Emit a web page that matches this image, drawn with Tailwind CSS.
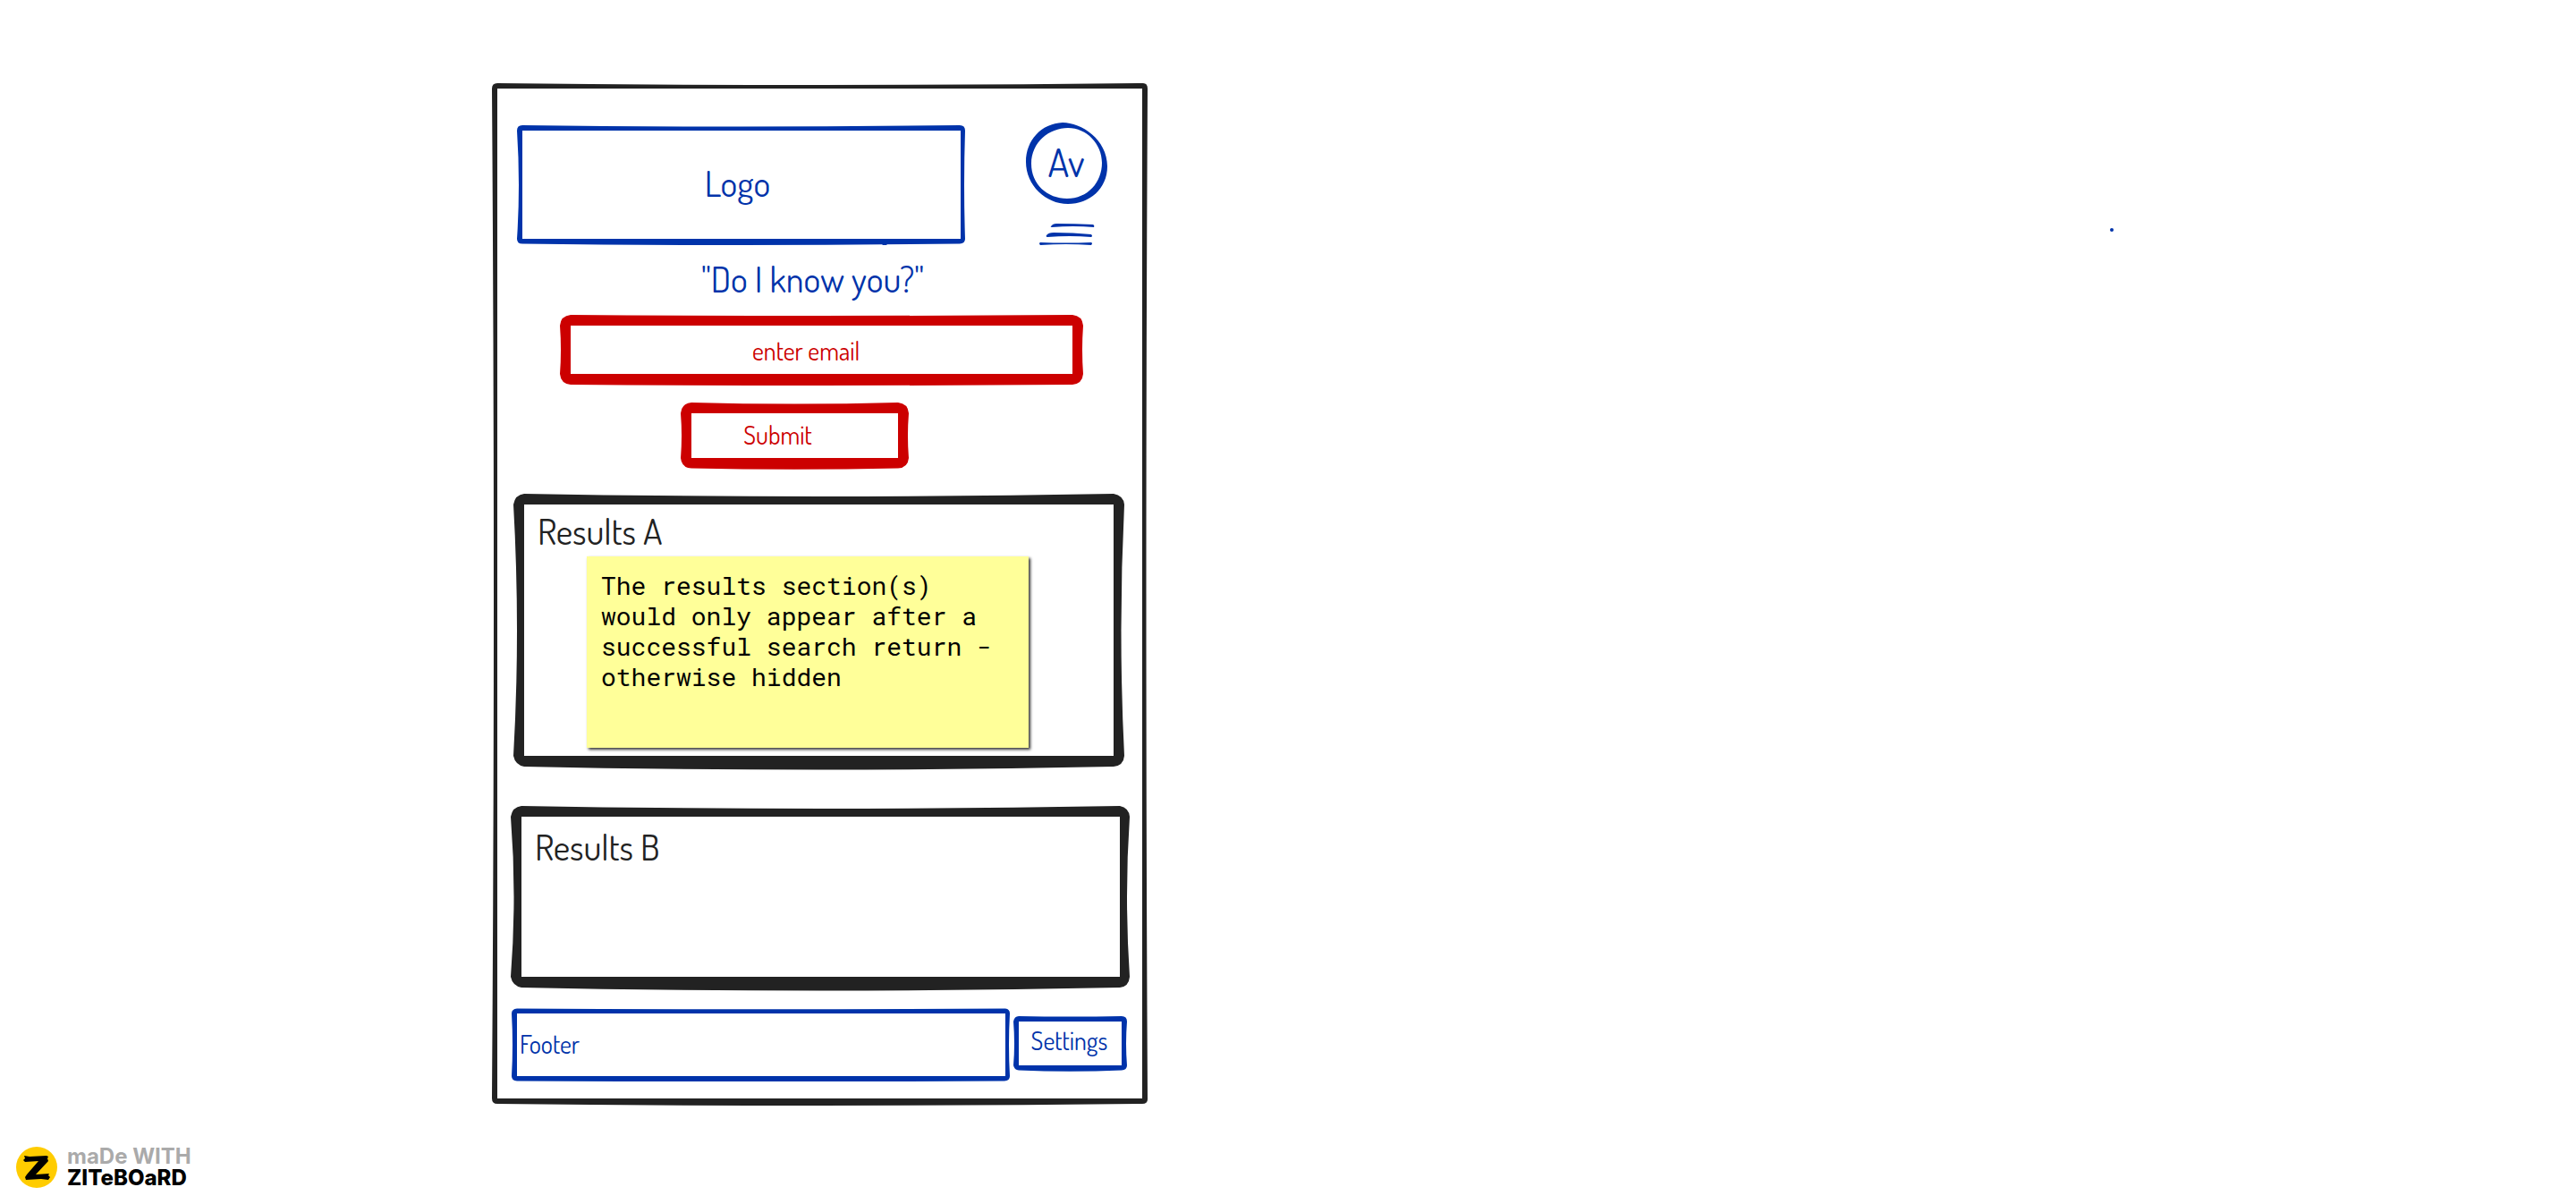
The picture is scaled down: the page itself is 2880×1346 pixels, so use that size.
<!DOCTYPE html>
<html lang="en">
<head>
<meta charset="utf-8">
<title>Email lookup wireframe</title>
<script src="https://cdn.jsdelivr.net/npm/@tailwindcss/browser@4"></script>
</head>
<body class="bg-white font-['Dosis','Liberation_Sans_Narrow','Roboto',sans-serif] text-[#222]">
<div class="flex min-h-screen flex-col justify-between">
  <div class="grid grid-cols-[550fr_734fr_1596fr] pt-[93px]">
    <main class="relative col-start-2 pt-[44px] pb-[27px]">
      <svg class="absolute inset-0 size-full" viewBox="0 0 734 1143" preserveAspectRatio="none" fill="#222" fill-rule="evenodd" aria-hidden="true"><path d="M0 6Q0 0 6 0Q367 4 728 0Q733 0 733 6Q730 571 733 1136Q733 1141 727 1141Q367 1145 6 1141Q0 1141 0 1135Q4 571 0 6ZM6 6V1135H727V6Z"/></svg>

      <header class="relative flex items-end pr-[45px] pl-[28px] text-[#03a]">
        <div class="relative mr-[68px] flex h-[134px] flex-1 items-center justify-center pr-2 pb-[6px]">
          <svg class="absolute inset-0 size-full" viewBox="0 0 501 134" preserveAspectRatio="none" fill="#03a" fill-rule="evenodd" aria-hidden="true"><path d="M0 6Q0 0 6 0Q250 3 495 0Q501 0 501 6Q499 67 501 127Q501 132 495 132.500Q250 135.500 6 132.500Q0 132.500 0 127Q4 67 0 6ZM6 6V127H496V6Z"/><circle cx="411" cy="133" r="2.500"/></svg>
          <span class="relative text-[40px] leading-[48px]">Logo</span>
        </div>
        <div class="flex w-[92px] flex-col items-center gap-[21px]">
          <div class="relative flex size-[92px] items-center justify-center pr-[2px] pb-[4px]">
            <svg class="absolute inset-0 size-full" viewBox="0 0 92 92" fill="#03a" fill-rule="evenodd" aria-hidden="true"><path d="M41 0C62 0 91 19 91 49C91 74 71 91 47 91C22 91 0 70 0 44C0 20 17 1 41 0ZM47 6C26 6 6 22 6 46C6 69 24 85 46 85C69 85 85 67 85 45C85 24 68 6 47 6Z"/></svg>
            <span class="relative text-[44px] leading-[48px]">Av</span>
          </div>
          <button type="button" aria-label="Menu" class="h-[24px] w-[62px]">
            <svg class="size-full" viewBox="0 0 62 24" fill="#03a"><path d="M13 3Q15 0 19 0Q40 0 60 1Q62 2 61 4Q38 2 14 4Q12 4 13 3ZM8 13Q10 10 16 10Q38 10 58 12Q60 14 58 15Q34 13 9 15Q7 15 8 13ZM1 21Q30 22 58 21Q60 22 58 24Q30 22 1 24Q-1 22 1 21Z"/></svg>
          </button>
        </div>
      </header>

      <form class="relative">
        <label for="email" class="block pr-[17px] pb-[4px] text-center text-[40px] leading-[74px] text-[#03a]">"Do I know you?"</label>
        <div class="relative mr-[73px] ml-[76px] h-[79px]">
          <svg class="absolute inset-0 size-full" viewBox="0 0 585 79" preserveAspectRatio="none" fill="#c00" fill-rule="evenodd" aria-hidden="true"><path d="M0 12Q1 1 12 0Q292 2 573 0Q584 1 585 12Q583 39 585 66Q584 77 573 78Q292 80 12 78Q1 77 0 66Q2 39 0 12ZM12 12V66H573V12Z"/></svg>
          <input id="email" type="email" placeholder="enter email" class="relative block size-full bg-transparent pl-[215px] text-[28px] leading-[36px] text-[#c00] outline-none placeholder:text-[#c00]">
        </div>
        <button type="button" class="relative mt-[19px] ml-[211px] block h-[75px] w-[255px] pr-[38px] pb-[3px] text-center text-[28px] leading-[36px] text-[#c00]">
          <svg class="absolute inset-0 size-full" viewBox="0 0 255 75" preserveAspectRatio="none" fill="#c00" fill-rule="evenodd" aria-hidden="true"><path d="M0 12Q1 1 12 0Q127 3 243 0Q254 1 255 12Q253 37 255 62Q254 73 243 73.500Q127 76 12 73.500Q1 73 0 62Q2 37 0 12ZM12 12V62H243V12Z"/></svg>
          <span class="relative">Submit</span>
        </button>
      </form>

      <section class="relative mt-[27px] mr-[27px] ml-[24px] h-[309px] pt-[21px]">
        <svg class="absolute inset-0 size-full" viewBox="0 0 683 309" preserveAspectRatio="none" fill="#222" fill-rule="evenodd" aria-hidden="true"><path d="M0 12Q2 1 12 0Q341 6 671 0Q682 2 683 12Q676 153 683 293Q682 304 671 305Q341 312 12 305Q2 303 0 293Q8 153 0 12ZM12 12V293H671V12Z"/></svg>
        <h2 class="relative pl-[27px] text-[40px] leading-[40px]">Results A</h2>
        <p class="relative mt-[9px] mr-[107px] ml-[82px] h-[214px] bg-[#ff9] pt-[16px] pr-[30px] pl-[16px] font-['Roboto_Mono','DejaVu_Sans_Mono',monospace] text-[28px] leading-[34px] text-black shadow-[2px_2px_3px_rgba(0,0,0,0.8)]">The results section(s) would only appear after a successful search return - otherwise hidden</p>
      </section>

      <section class="relative mx-[21px] mt-[40px] h-[207px] pt-[25px]">
        <svg class="absolute inset-0 size-full" viewBox="0 0 692 207" preserveAspectRatio="none" fill="#222" fill-rule="evenodd" aria-hidden="true"><path d="M0 12Q2 1 12 0Q346 6 681 0Q691 2 692 12Q686 101 692 191Q691 202 681 203Q346 210 12 203Q2 201 0 191Q7 101 0 12ZM12 12V191H681V12Z"/></svg>
        <h2 class="relative pl-[27px] text-[40px] leading-[40px]">Results B</h2>
      </section>

      <footer class="relative mt-[19px] mr-[24px] ml-[22px] flex items-center gap-[3px] text-[28px] leading-[36px] text-[#03a]">
        <div class="relative flex h-[82px] flex-1 items-center pb-[2px] pl-[9px]">
          <svg class="absolute inset-0 size-full" viewBox="0 0 558 82" preserveAspectRatio="none" fill="#03a" fill-rule="evenodd" aria-hidden="true"><path d="M0 6Q0 1 6 0.500Q279 2 552 0.500Q557 1 557 6Q555 41 557 76Q557 81 551 81.500Q279 83 6 81.500Q0 81 0 76Q2 41 0 6ZM6 6V76H552V6Z"/></svg>
          <span class="relative">Footer</span>
        </div>
        <button type="button" class="relative mb-[2px] h-[62px] w-[127px] pr-[2px] pb-[8px] text-center">
          <svg class="absolute inset-0 size-full" viewBox="0 0 127 62" preserveAspectRatio="none" fill="#03a" fill-rule="evenodd" aria-hidden="true"><path d="M0 6Q1 0 6 0Q63 1 121 0Q127 0 127 6Q125 31 127 55Q127 60 121 60.500Q63 63 6 60.500Q1 60 0 55Q2 31 0 6ZM6 6V55H121V6Z"/></svg>
          <span class="relative">Settings</span>
        </button>
      </footer>
    </main>
    <div class="relative col-start-3">
      <span class="absolute top-[162px] left-[67.350%] size-[4px] rounded-full bg-[#03a]"></span>
    </div>
  </div>

  <a href="#" class="mb-[17px] ml-[18px] flex items-center gap-[11px] self-start font-['Inter',sans-serif]">
    <svg class="size-[46px]" viewBox="0 0 46 46" aria-hidden="true"><circle cx="23" cy="23" r="23" fill="#fc0"/><path d="M9 10L15 11L34 10L36 11L35 13L36 16L22 31L37 30L36 32L38 34L36 37L28 36L11 37L10 34L12 31L25 16L10 17L8 15L10 13Z"/></svg>
    <span class="flex flex-col text-[24px] leading-[24px]">
      <span class="font-bold text-[#aaa]">maDe WITH</span>
      <span class="font-extrabold text-black">ZITeBOaRD</span>
    </span>
  </a>
</div>
</body>
</html>
